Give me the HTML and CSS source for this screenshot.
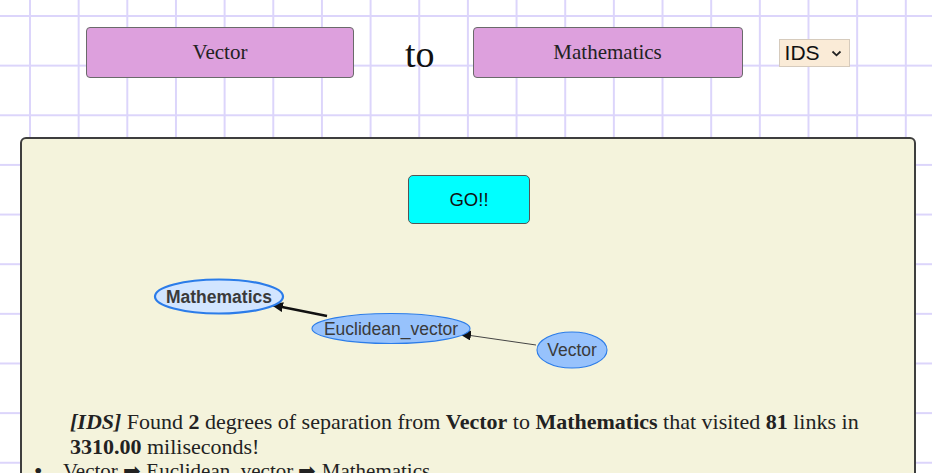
FILE: index.html
```html
<!DOCTYPE html>
<html>
<head>
<meta charset="utf-8">
<link rel="stylesheet" href="styles.css">
</head>
<body>
<div class="header">
  <div class="term term-from">Vector</div>
  <span class="to">to</span>
  <div class="term term-to">Mathematics</div>
  <div class="algo">IDS <svg class="chev" width="11" height="7" viewBox="0 0 11 7"><path d="M1.5 1.5 L5.5 5.3 L9.5 1.5" fill="none" stroke="#222" stroke-width="1.8"/></svg></div>
</div>
<div class="panel">
  <div class="go">GO!!</div>
  <svg class="graph" width="891" height="186" viewBox="0 0 891 186">
    <defs>
      <marker id="ah" markerWidth="12" markerHeight="10" refX="11" refY="5" orient="auto" markerUnits="userSpaceOnUse">
        <path d="M0 0 L12 5 L0 10 Z" fill="#111"/>
      </marker>
    </defs>
    <line x1="305" y1="92" x2="250" y2="81" stroke="#111" stroke-width="2.6" marker-end="url(#ah)"/>
    <line x1="514" y1="121" x2="438" y2="110" stroke="#444" stroke-width="1" marker-end="url(#ah)"/>
    <ellipse cx="197" cy="72.5" rx="64" ry="17" fill="#d2e5ff" stroke="#2b7ce9" stroke-width="2.2"/>
    <text x="197" y="78.5" class="lbl bold" text-anchor="middle">Mathematics</text>
    <ellipse cx="369" cy="104.5" rx="79" ry="15" fill="#97c2fc" stroke="#2b7ce9" stroke-width="1.1"/>
    <text x="369" y="110.5" class="lbl" text-anchor="middle">Euclidean_vector</text>
    <ellipse cx="550" cy="126" rx="35" ry="18" fill="#97c2fc" stroke="#2b7ce9" stroke-width="1.1"/>
    <text x="550" y="132" class="lbl" text-anchor="middle">Vector</text>
  </svg>
  <p class="result"><b><i>[IDS]</i></b> Found <b>2</b> degrees of separation from <b>Vector</b> to <b>Mathematics</b> that visited <b>81</b> links in <b>3310.00</b> miliseconds!</p>
  <ul class="path">
    <li>Vector ➡ Euclidean_vector ➡ Mathematics</li>
  </ul>
</div>
</body>
</html>
```

FILE: styles.css
```css
html, body {
  margin: 0;
  padding: 0;
}
body {
  background-color: #ffffff;
  background-image:
    linear-gradient(to right, #dcd5fb 0, #dcd5fb 2px, transparent 2px),
    linear-gradient(to bottom, #dcd5fb 0, #dcd5fb 2px, transparent 2px);
  background-size: 48.67px 49.65px, 48.67px 49.65px;
  background-position: 29px 15px, 29px 15px;
  font-family: "Liberation Serif", "Times New Roman", serif;
  color: #222;
  height: 473px;
  overflow: hidden;
}
.header {
  display: flex;
  align-items: center;
  padding: 27px 0 0 86px;
  height: 51px;
}
.term {
  box-sizing: border-box;
  height: 51px;
  background: #dda0dd;
  border: 1px solid #6a6a6a;
  border-radius: 4px;
  display: flex;
  align-items: center;
  justify-content: center;
  font-size: 21px;
  color: #222;
}
.term-from {
  width: 268px;
  margin-right: 51px;
}
.term-to {
  width: 270px;
  margin-right: 36px;
}
.to {
  font-size: 38px;
  margin-right: 38px;
  line-height: 1;
  position: relative;
  top: 1px;
  color: #111;
}
.algo {
  box-sizing: border-box;
  width: 71px;
  height: 28px;
  background: #faebd7;
  border: 1px solid #d6cbbd;
  font-family: "Liberation Sans", Arial, sans-serif;
  font-size: 21px;
  color: #111;
  display: flex;
  align-items: center;
  padding-left: 5px;
  gap: 11px;
  margin-top: 1px;
}
.chev {
  display: block;
}
.panel {
  box-sizing: border-box;
  margin: 59px 0 0 20px;
  width: 896px;
  height: 400px;
  background: #f4f3dc;
  border: 2px solid #3e3e3e;
  border-radius: 6px;
  padding-top: 36px;
}
.go {
  box-sizing: border-box;
  width: 122px;
  height: 49px;
  margin: 0 auto 0 386px;
  background: #00ffff;
  border: 1px solid #555;
  border-radius: 5px;
  display: flex;
  align-items: center;
  justify-content: center;
  font-family: "Liberation Sans", Arial, sans-serif;
  font-size: 18.5px;
  color: #111;
}
.graph {
  display: block;
}
.lbl {
  font-family: "Liberation Sans", Arial, sans-serif;
  font-size: 17.5px;
  fill: #3a3a3a;
}
.bold {
  font-weight: bold;
}
.result {
  margin: 0 40px 0 48px;
  font-size: 22px;
  line-height: 24.5px;
  color: #222;
}
.path {
  margin: 0;
  padding-left: 12px;
  list-style: none;
  font-size: 21px;
  line-height: 24.5px;
}
.path li {
  display: flex;
}
.path li::before {
  content: "•";
  width: 29px;
  flex: none;
  font-size: 24px;
}
```
